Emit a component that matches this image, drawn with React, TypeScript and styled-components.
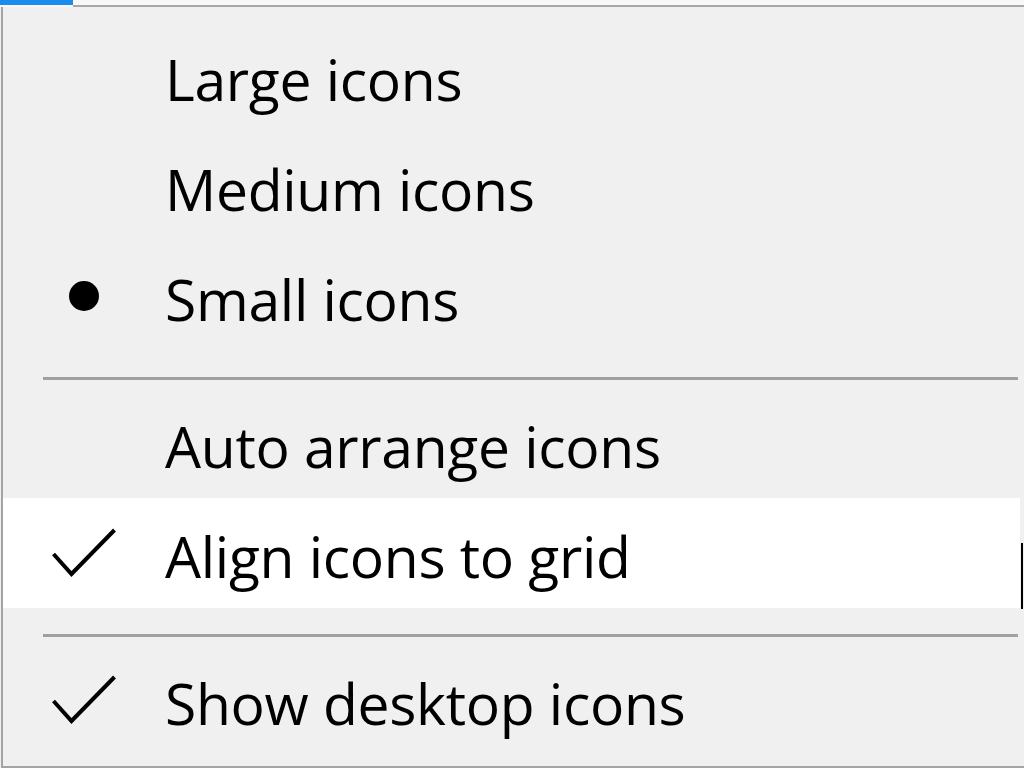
import React from 'react'
import styled, { createGlobalStyle } from 'styled-components'

const Global = createGlobalStyle`
  html, body {
    margin: 0;
    padding: 0;
    overflow: hidden;
    background: #f0f0f0;
  }
`

const Screen = styled.div`
  position: relative;
  width: 1024px;
  height: 768px;
  background: #f0f0f0;
  font-family: "Open Sans", "Noto Sans", sans-serif;
  display: flex;
  flex-direction: column;
`

const TopStrip = styled.div`
  display: flex;
  height: 7px;
  background: #f8f8f8;
`

const BlueTab = styled.div`
  width: 73px;
  height: 5px;
  background: #1a8cec;
`

const StripRest = styled.div`
  flex: 1;
  height: 5px;
  border-bottom: 2px solid #a8a8a8;
`

const Menu = styled.div`
  flex: 1;
  margin-left: 1px;
  border-left: 2px solid #a4a4a4;
  border-bottom: 2px solid #a4a4a4;
  padding: 14px 4px 9px 0;
  display: flex;
  flex-direction: column;
`

const Item = styled.div<{ $hover?: boolean }>`
  display: grid;
  grid-template-columns: 162px 1fr;
  height: 110px;
  align-items: center;
  background: ${p => (p.$hover ? '#ffffff' : 'transparent')};
`

const Mark = styled.div`
  display: flex;
  align-items: center;
  justify-content: center;
`

const Label = styled.span`
  display: block;
  height: 110px;
  font-size: 57px;
  line-height: 116px;
  letter-spacing: -0.3px;
  color: #000;
  white-space: nowrap;
`

const Bullet = styled.div`
  width: 30px;
  height: 30px;
  border-radius: 50%;
  background: #000;
`

const Separator = styled.div`
  height: 37px;
  padding-top: 26px;
  box-sizing: border-box;
  padding-left: 40px;
  &::after {
    content: '';
    display: block;
    height: 3px;
    margin-right: 2px;
    background: #a0a0a0;
  }
`

const Caret = styled.div`
  position: absolute;
  left: 1021px;
  top: 543px;
  width: 2px;
  height: 66px;
  background: #000;
`

const Check = () => (
  <svg width="66" height="52" viewBox="0 0 66 52">
    <polyline points="2.5,27 20.5,47 63.5,3" fill="none" stroke="#000" strokeWidth="4" />
  </svg>
)

type Entry =
  | { kind: 'item'; label: string; mark?: 'dot' | 'check'; hover?: boolean }
  | { kind: 'sep' }

const entries: Entry[] = [
  { kind: 'item', label: 'Large icons' },
  { kind: 'item', label: 'Medium icons' },
  { kind: 'item', label: 'Small icons', mark: 'dot' },
  { kind: 'sep' },
  { kind: 'item', label: 'Auto arrange icons' },
  { kind: 'item', label: 'Align icons to grid', mark: 'check', hover: true },
  { kind: 'sep' },
  { kind: 'item', label: 'Show desktop icons', mark: 'check' },
]

const App: React.FC = () => {
  return (
    <Screen>
      <Global />
      <TopStrip>
        <BlueTab />
        <StripRest />
      </TopStrip>
      <Menu>
        {entries.map((e, i) =>
          e.kind === 'sep' ? (
            <Separator key={i} />
          ) : (
            <Item key={i} $hover={e.hover}>
              <Mark>
                {e.mark === 'dot' && <Bullet />}
                {e.mark === 'check' && <Check />}
              </Mark>
              <Label>{e.label}</Label>
            </Item>
          )
        )}
      </Menu>
      <Caret />
    </Screen>
  )
}

export default App
